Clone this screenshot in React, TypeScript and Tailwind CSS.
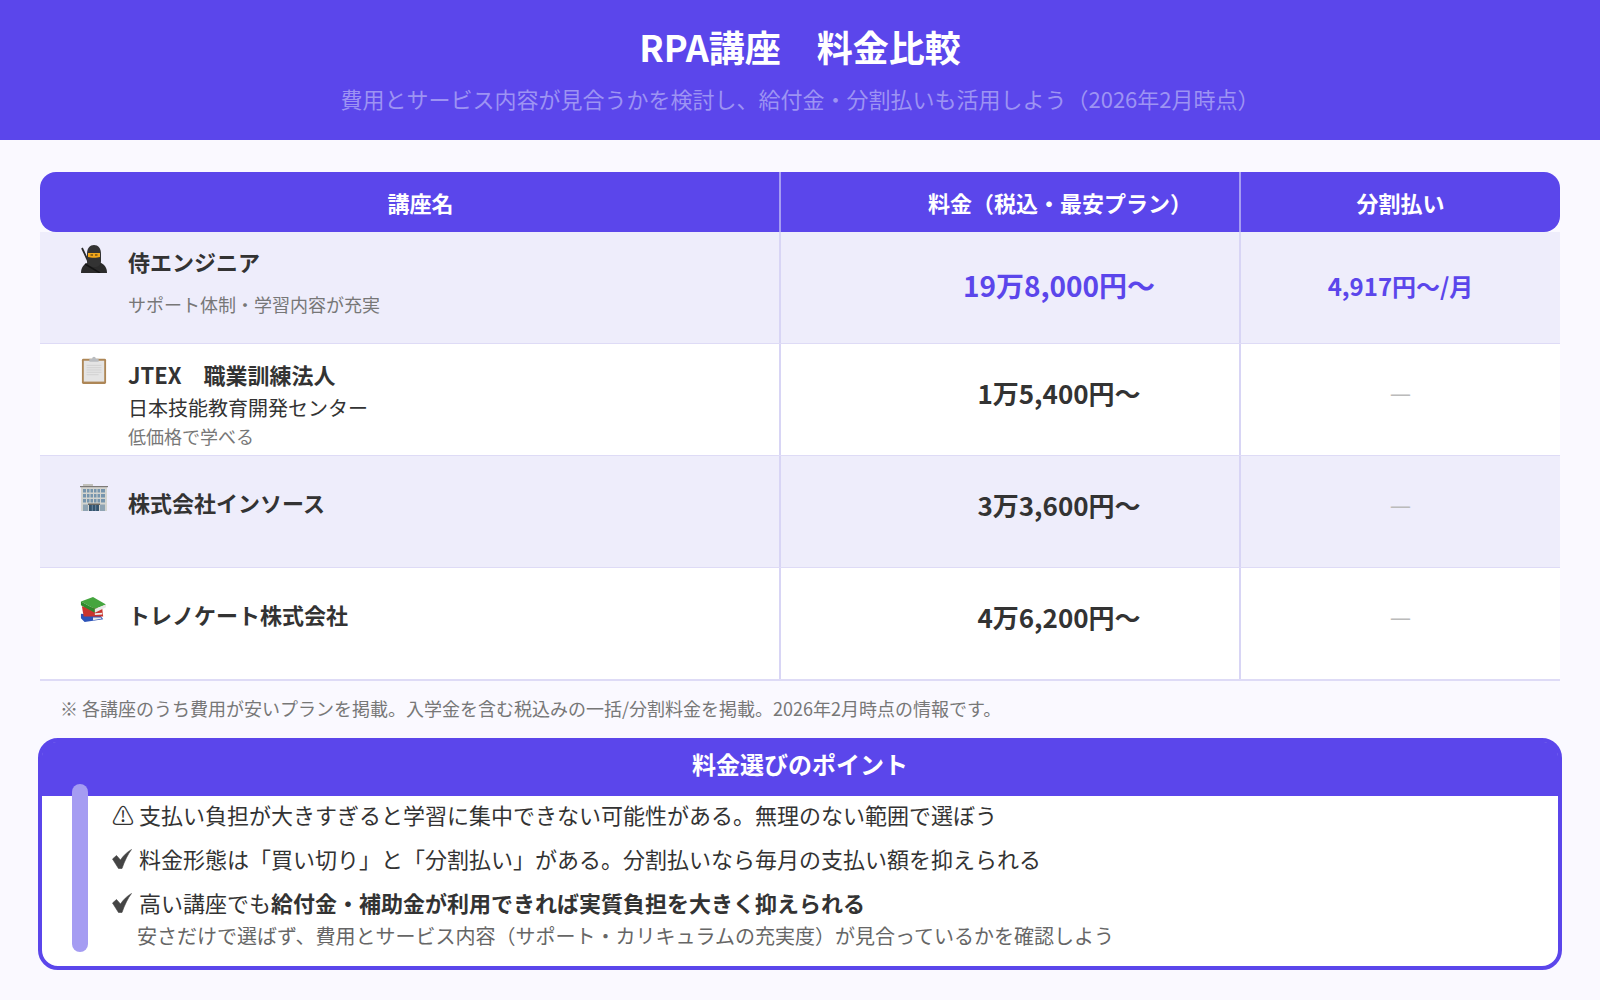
import React from 'react';

const FONT = "font-['Noto_Sans_CJK_JP','Noto_Sans',sans-serif]";

const NinjaIcon = () => (
  <svg width="28" height="28" viewBox="0 0 28 28">
    <path d="M2 3 L9 18" stroke="#2a2a2a" strokeWidth="1.8" />
    <path d="M1 28 C1 22 4 19 9 17 H19 C24 19 27 22 27 28 Z" fill="#2b2b2b" />
    <path d="M7 9 C7 3 10 0 14 0 C18 0 21 3 21 9 V16 C21 20 18 22 14 22 C10 22 7 20 7 16 Z" fill="#333" />
    <path d="M8 8 H20 V12 C17 13 11 13 8 12 Z" fill="#f2a71b" />
    <path d="M10.5 10 h2.5 M15 10 h2.5" stroke="#3a2a10" strokeWidth="1.2" />
    <path d="M5 19 L20 28" stroke="#151515" strokeWidth="1.5" />
  </svg>
);

const ClipboardIcon = () => (
  <svg width="26" height="28" viewBox="0 0 28 30">
    <rect x="1" y="3" width="26" height="27" rx="1.5" fill="#ad8656" />
    <rect x="3" y="5" width="22" height="22.5" fill="#e4e4e4" />
    <path d="M6 10h16M6 12.5h16M6 15h16M6 17.5h16M6 20h13" stroke="#d0d0d0" strokeWidth="1" />
    <path d="M9 3 H12 C12 0 16 0 16 3 H19 V6 H9 Z" fill="#b9bcc0" />
  </svg>
);

const BuildingIcon = () => (
  <svg width="28" height="27" viewBox="0 0 28 27">
    <rect x="3" y="0" width="10" height="3" fill="#c3c2bc" />
    <rect x="1" y="2" width="26" height="25" fill="#d4d4cf" />
    <rect x="0" y="2" width="28" height="1.2" fill="#7d7a78" />
    <path d="M3 5h22v3.4H3zM3 10h22v3.4H3zM3 15h22v3.4H3z" fill="#7795ad" />
    <path d="M6.5 5v14M10 5v14M13.5 5v14M17 5v14M20.5 5v14" stroke="#d4d4cf" strokeWidth="1" />
    <rect x="3" y="20.5" width="5" height="6.5" fill="#8fa4b3" />
    <rect x="20" y="20.5" width="5" height="6.5" fill="#8fa4b3" />
    <rect x="8" y="19.5" width="12" height="1.5" fill="#6b6964" />
    <rect x="9" y="21" width="10" height="6" fill="#35546e" />
    <path d="M12.3 21v6M15.7 21v6" stroke="#7795ad" strokeWidth="0.8" />
  </svg>
);

const BooksIcon = () => (
  <svg width="26" height="27" viewBox="0 0 28 27">
    <path d="M1 18 L22 20 L25 24 L5 27 L1 23 Z" fill="#2c53b8" />
    <path d="M14 22 L23 22 V23.5 L14 25 Z" fill="#e8e8e8" />
    <path d="M2 10 L24 13 L25 21 L4 21 Z" fill="#c9352e" />
    <path d="M16 17.5 L24 17 V19 L16 19.5 Z" fill="#ededed" />
    <path d="M1 5 L14 0 L28 8 L16 13 Z" fill="#45a53f" />
    <path d="M1 5 L16 13 V17 L1 9 Z" fill="#2e8a2c" />
    <path d="M16 13 L28 8 V11 L16 17 Z" fill="#e8e8e8" />
  </svg>
);

const CheckIcon = () => (
  <span className="inline-block w-[27px] align-[-1px]">
    <svg width="20" height="20" viewBox="0 0 20 20">
      <path d="M0.5 10 L4.5 6.5 L8.5 11 C11 7 15 3 19.5 0.5 C16 5 12.5 12 10 19.5 H6.5 Z" fill="#444" stroke="#444" strokeWidth="0.6" strokeLinejoin="round" />
    </svg>
  </span>
);

const rows = [
  { icon: <NinjaIcon />, name: ['侍エンジニア'], note: 'サポート体制・学習内容が充実', price: '19万8,000円〜', split: '4,917円〜/月', hl: true },
  { icon: <ClipboardIcon />, name: ['JTEX　職業訓練法人', '日本技能教育開発センター'], note: '低価格で学べる', price: '1万5,400円〜', split: '—', hl: false },
  { icon: <BuildingIcon />, name: ['株式会社インソース'], note: '', price: '3万3,600円〜', split: '—', hl: false },
  { icon: <BooksIcon />, name: ['トレノケート株式会社'], note: '', price: '4万6,200円〜', split: '—', hl: false },
];

const App: React.FC = () => {
  return (
    <div className={`${FONT} w-[1600px] h-[1000px] overflow-hidden bg-[#faf9ff] text-[#333]`}>
      {/* Header */}
      <div className="h-[140px] bg-[#5b46eb] flex flex-col items-center pt-[20px]">
        <h1 className="text-[36px] leading-[52px] font-bold text-white">RPA講座　料金比較</h1>
        <p className="mt-[10px] text-[22px] leading-[32px] text-[#9d93f3]">費用とサービス内容が見合うかを検討し、給付金・分割払いも活用しよう（2026年2月時点）</p>
      </div>

      <div className="px-[40px] pt-[32px]">
        {/* Table */}
        <div className="grid grid-cols-[739px_460px_321px] h-[60px] rounded-[16px] bg-[#5b46eb] text-white font-bold text-[22px]">
          <div className="flex items-center justify-center pl-[22px]">講座名</div>
          <div className="flex items-center justify-center pl-[100px] border-l-2 border-[#a59cf2]">料金（税込・最安プラン）</div>
          <div className="flex items-center justify-center border-l-2 border-[#a59cf2]">分割払い</div>
        </div>
        {rows.map((r, i) => (
          <div
            key={r.price}
            className={`grid grid-cols-[739px_460px_321px] ${i === 3 ? 'h-[113px] border-b-2' : 'h-[112px] border-b'} border-[#dedbf6] ${i % 2 === 0 ? 'bg-[#eeedfb]' : 'bg-white'}`}
          >
            <div className="flex pl-[40px]">
              <div className={`w-[48px] shrink-0 ${i === 0 ? 'pt-[13px]' : i === 1 ? 'pt-[12px] pl-[1px]' : 'pt-[28px]'}`}>{r.icon}</div>
              <div className={i === 0 ? 'pt-[13px]' : i === 1 ? 'pt-[14px]' : 'pt-[30px]'}>
                <div className="text-[22px] leading-[32px] font-bold">{r.name[0]}</div>
                {r.name[1] && <div className="text-[20px] leading-[32px] mt-[2px]">{r.name[1]}</div>}
                {r.note && <div className={`text-[18px] text-[#777] ${i === 0 ? 'leading-[26px] mt-[14px]' : 'leading-[24px]'}`}>{r.note}</div>}
              </div>
            </div>
            <div className={`flex items-center justify-center pl-[98px] border-l-2 border-[#d8d5f5] font-bold ${r.hl ? 'pb-[6px] text-[28px] text-[#5b46eb]' : 'pb-[14px] text-[26px]'}`}>{r.price}</div>
            <div className={`flex items-center justify-center border-l-2 border-[#d8d5f5] ${r.hl ? 'pb-[4px] text-[24px] font-bold text-[#5b46eb]' : 'pb-[16px] text-[24px] text-[#bbb]'}`}>{r.split}</div>
          </div>
        ))}

        <p className="pl-[20px] mt-[14px] text-[18px] leading-[26px] text-[#777]">※ 各講座のうち費用が安いプランを掲載。入学金を含む税込みの一括/分割料金を掲載。2026年2月時点の情報です。</p>

        {/* Points box */}
        <div className="relative -mx-[2px] mt-[17px] h-[232px] rounded-[20px] border-4 border-[#5b46eb] bg-white">
          <div className="h-[54px] pb-[10px] bg-[#5b46eb] flex items-center justify-center text-white font-bold text-[24px] rounded-t-[14px]">料金選びのポイント</div>
          <div className="absolute left-[30px] top-[42px] w-[16px] h-[168px] rounded-[8px] bg-[#a59cf2]" />
          <ul className="pl-[70px] -mt-[4px] text-[22px]">
            <li className="h-[44px] leading-[44px]">⚠ 支払い負担が大きすぎると学習に集中できない可能性がある。無理のない範囲で選ぼう</li>
            <li className="h-[44px] leading-[44px]"><CheckIcon />料金形態は「買い切り」と「分割払い」がある。分割払いなら毎月の支払い額を抑えられる</li>
            <li className="h-[44px] leading-[44px]"><CheckIcon />高い講座でも<b>給付金・補助金が利用できれば実質負担を大きく抑えられる</b></li>
            <li className="pl-[25px] text-[20px] leading-[24px] text-[#666]">安さだけで選ばず、費用とサービス内容（サポート・カリキュラムの充実度）が見合っているかを確認しよう</li>
          </ul>
        </div>
      </div>
    </div>
  );
};

export default App;
